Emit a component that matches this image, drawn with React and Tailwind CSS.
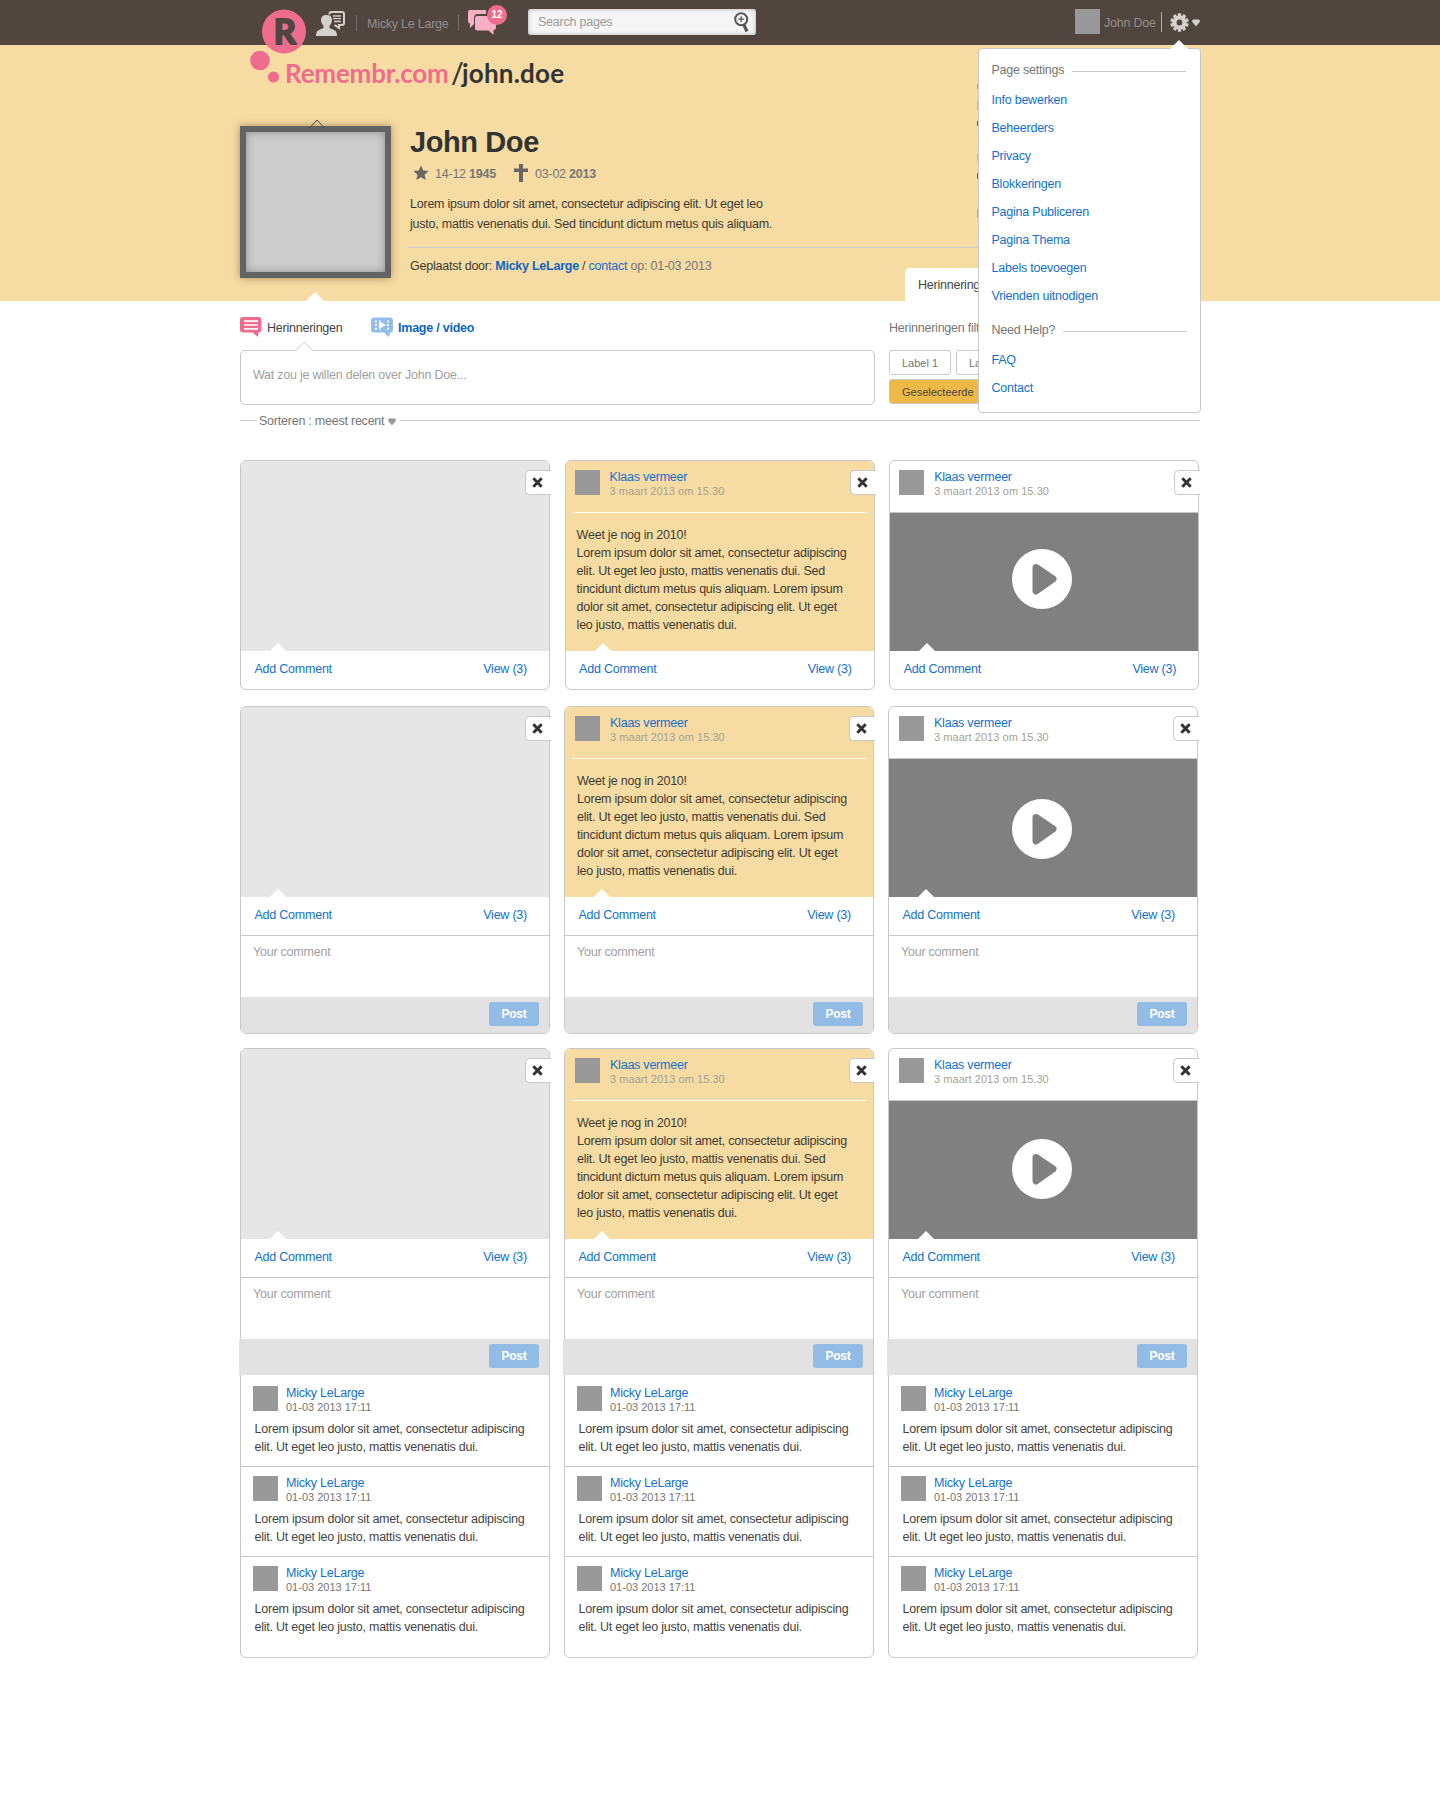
import React from "react";

const LOREM = "Lorem ipsum dolor sit amet, consectetur adipiscing";

function Notch({ className = "" }) {
  return (
    <svg className={"absolute " + className} width="18" height="9" viewBox="0 0 18 9">
      <path d="M0 9 L9 0 L18 9 Z" fill="#fff" />
    </svg>
  );
}

function Caret({ className = "" }) {
  return (
    <svg className={className} width="8" height="8" viewBox="0 0 8 8">
      <path d="M1.6 .5 H6.4 Q8 .5 8 2 Q8 3 6 5 L4 7.6 L2 5 Q0 3 0 2 Q0 .5 1.6 .5Z" fill="currentColor" />
    </svg>
  );
}

function Logo() {
  return (
    <div className="absolute left-[10px] top-[9px] h-[75px] w-[330px]">
      <svg className="absolute left-0 top-0" width="56" height="75" viewBox="250 9 56 75">
        <circle cx="284" cy="31.5" r="22" fill="#ef6c8d" />
        <circle cx="260" cy="60.5" r="9.8" fill="#ef6c8d" />
        <circle cx="273.5" cy="77" r="5.6" fill="#ef6c8d" />
        <text x="284.8" y="44" textAnchor="middle" fontFamily="Lato, sans-serif" fontWeight="700" fontSize="34.5" fill="#51453f" stroke="#51453f" strokeWidth="2" strokeLinejoin="round">R</text>
      </svg>
      <div className="absolute left-[35px] top-[47px] flex items-baseline whitespace-nowrap font-['Lato',sans-serif] text-[26px] font-bold leading-[32px]">
        <span className="w-[166px] tracking-[-0.2px] text-[#ef6c8d]">Remembr.com</span>
        <span className="w-[11px] text-[28px] font-medium text-[#333]">/</span>
        <span className="tracking-[0.2px] text-[#333]">john.doe</span>
      </div>
    </div>
  );
}

function TopBar() {
  return (
    <header className="h-[45px] bg-[#51453f]">
      <div className="relative mx-auto flex h-[45px] w-[960px] text-[#948d89]">
        <Logo />
        <svg className="ml-[76px] mt-[10px]" width="30" height="27" viewBox="0 0 30 27">
          <path d="M0 26 Q0 21 3 20 L7.5 18 V16 Q5 13.500 5 10 Q5 5 10.500 5 Q16 5 16 10 Q16 13.500 13.500 16 V18 L18 20 Q21 21 21 26 Z" fill="#d6d0cd" />
          <path d="M13.500 4.500 V4 Q13.500 2 15.500 2 H26 Q28 2 28 4 V13 Q28 15 26 15 H23 V18 L18.500 15" fill="none" stroke="#d6d0cd" strokeWidth="2" />
          <path d="M17 6 H25 M17 8.700 H25 M18 11.500 H25" stroke="#d6d0cd" strokeWidth="1.300" />
        </svg>
        <div className="ml-[10px] mt-[15px] h-4 w-px bg-[#766d68]" />
        <span className="ml-[10px] mt-[16px] w-[91px] leading-4">Micky Le Large</span>
        <div className="mt-[15px] h-4 w-px bg-[#766d68]" />
        <div className="relative ml-[9px] mt-[5px] h-[30px] w-[40px]">
          <svg className="mt-[5px]" width="30" height="26" viewBox="0 0 30 26">
            <path d="M2 0 H18 V4 H10 Q6 4 6 8 V14 L2 18 V13.500 H2 Q0 13.500 0 11 V2 Q0 0 2 0Z" fill="#f7b0c3" />
            <path d="M9 6 H25 Q28 6 28 9 V17 Q28 20 25.500 20 L25.500 25 L20.500 20.500 H9 Q7 20.500 7 18 V8 Q7 6 9 6Z" fill="#f7b0c3" />
          </svg>
          <span className="absolute left-[19px] top-0 flex size-5 items-center justify-center rounded-full bg-[#ef6c8d] text-[10px] font-bold tracking-normal text-white">12</span>
        </div>
        <div className="ml-[20px] mt-[9px] flex h-[26px] w-[228px] rounded-[3px] bg-[#f6f6f6] pl-[10px] pr-[7px] text-[#999] shadow-[inset_0_0_4px_#aaa]">
          <span className="mt-[5px] grow leading-4">Search pages</span>
          <svg className="mt-[3px]" width="15" height="21" viewBox="0 0 15 21">
            <circle cx="7.200" cy="7.200" r="6" fill="none" stroke="#555" strokeWidth="2" />
            <path d="M7.200 4.200 V10.200 M4.200 7.200 H10.200" stroke="#555" strokeWidth="1.300" />
            <path d="M10 13 L13 19.500" stroke="#555" strokeWidth="3.200" />
          </svg>
        </div>
        <div className="ml-auto mt-[9px] size-[25px] bg-[#999]" />
        <span className="ml-[4px] mt-[15px] w-[57px] leading-4">John Doe</span>
        <div className="mt-[12px] h-5 w-px bg-[#b5afac]" />
        <svg className="ml-[8px] mt-[13px]" width="19" height="19" viewBox="-9.500 -9.500 19 19">
          <g fill="#d6d0cd">
            {[0, 36, 72, 108, 144].map((a) => (
              <rect key={a} x="-1.700" y="-9.200" width="3.400" height="18.400" rx=".5" transform={"rotate(" + a + ")"} />
            ))}
            <circle r="7" />
          </g>
          <circle r="2.900" fill="#51453f" />
        </svg>
        <Caret className="ml-[3px] mt-[19px] text-[#d6d0cd]" />
      </div>
    </header>
  );
}

const linkGroups = [
  { title: "Page settings", links: ["Info bewerken", "Beheerders", "Privacy", "Blokkeringen", "Pagina Publiceren", "Pagina Thema", "Labels toevoegen", "Vrienden uitnodigen"] },
  { title: "Need Help?", links: ["FAQ", "Contact"] },
];

function SettingsMenu() {
  return (
    <div className="absolute left-[738px] top-[48px] z-20 h-[365px] w-[223px] rounded-[4px] border border-[#c8c8c8] bg-white pl-[12.500px] pr-[14px] pt-[7px]">
      <Notch className="-top-[9px] left-[191px]" />
      {linkGroups.map((g) => (
        <div key={g.title} className="mb-[6px]">
          <div className="flex h-[28px] items-center gap-[8px] text-[#757575]">
            <span>{g.title}</span>
            <div className="mt-[2px] h-px grow bg-[#c8c8c8]" />
          </div>
          <ul className="pt-[2px]">
            {g.links.map((l) => (
              <li key={l} className="h-[28px] leading-[28px] text-[#1270d0]">{l}</li>
            ))}
          </ul>
        </div>
      ))}
    </div>
  );
}

function Profile() {
  return (
    <section className="h-[256px] bg-[#f6dca3]">
      <div className="relative mx-auto flex h-[256px] w-[960px]">
        <div className="relative mt-[81px] h-[152px] w-[151px] border-[6px] border-[#636363] bg-[#ccc] shadow-[0_0_8px_rgba(90,70,30,.5),inset_0_0_8px_rgba(0,0,0,.3)]">
          <svg className="absolute -top-[13px] left-[62px]" width="18" height="10" viewBox="0 0 18 10">
            <path d="M1 9.500 L9 1 L17 9.500" fill="none" stroke="#444" strokeWidth="1" />
          </svg>
        </div>
        <Notch className="bottom-0 left-[66px]" />
        <div className="ml-[17px] grow">
          <h1 className="ml-[2px] mt-[81px] text-[29px] font-bold leading-[32px] tracking-[-0.4px] text-[#333]">John Doe</h1>
          <div className="ml-[5px] mt-[5px] flex h-[20px] items-center text-[#757575]">
            <svg width="16" height="16" viewBox="0 0 16 16">
              <path d="M8 .5 L10.300 5.500 L15.500 6 L11.500 9.700 L12.700 15 L8 12.300 L3.300 15 L4.500 9.700 L.5 6 L5.700 5.500Z" fill="#666" />
            </svg>
            <span className="ml-[6px] mt-px w-[79px]">14-12 <b>1945</b></span>
            <svg width="14" height="18" viewBox="0 0 14 18">
              <path d="M5 0 H9 V4.500 H14 V8 H9 V18 H5 V8 H0 V4.500 H5Z" fill="#666" />
            </svg>
            <span className="ml-[7px] mt-px">03-02 <b>2013</b></span>
          </div>
          <p className="ml-[2px] mt-[11px] w-[400px] leading-[20px] text-[#3f3a30]">
            {LOREM} elit. Ut eget leo<br />justo, mattis venenatis dui. Sed tincidunt dictum metus quis aliquam.
          </p>
          <div className="mt-[13px] h-px bg-[#ccc]" />
          <p className="ml-[2px] mt-[10px] text-[#3f3a30]">
            Geplaatst door: <b className="tracking-[-0.25px] text-[#0c66c4]">Micky LeLarge</b> / <span className="text-[#1270d0]">contact</span> <span className="text-[#757575]">op: 01-03 2013</span>
          </p>
        </div>
        <div className="absolute bottom-0 left-[665px] h-[33px] w-[120px] rounded-t-[5px] bg-white pl-[13px] pt-[9px] text-[#444]">Herinneringen</div>
        <div className="absolute left-[737px] top-[39px] w-px">
          <div className="h-[5px] bg-[#a39b8a]" />
          <div className="mt-[12px] h-[9px] bg-[#cbb990]" />
          <div className="mt-[11px] h-[5px] bg-[#1270d0]" />
          <div className="mt-[28px] h-[7px] bg-[#c9b68d]" />
          <div className="mt-[12px] h-[6px] bg-[#6e6450]" />
          <div className="mt-[30px] h-[9px] bg-[#a3b0ad]" />
        </div>
      </div>
    </section>
  );
}

function Composer() {
  return (
    <section className="flex h-[119px]">
      <div className="w-[635px]">
        <div className="flex h-[36px] pt-[16px]">
          <svg width="22" height="20" viewBox="0 0 22 20">
            <path d="M3 0 H18.500 Q21.500 0 21.500 3 V12.500 Q21.500 15.500 18.500 15.500 L18 20 L12.500 15.500 H3 Q0 15.500 0 12.500 V3 Q0 0 3 0Z" fill="#ef6c8d" />
            <path d="M4 4.200 H18 M4 8 H18 M4 11.800 H18" stroke="#fff" strokeWidth="1.700" />
          </svg>
          <span className="ml-[5px] mt-[3px] w-[104px] text-[#444]">Herinneringen</span>
          <svg width="22" height="20" viewBox="0 0 22 20">
            <path d="M3 .5 H19 Q22 .5 22 3.500 V12.500 Q22 15.500 19 15.500 L18 20 L13 15.500 H3 Q0 15.500 0 12.500 V3.500 Q0 .5 3 .5Z" fill="#94bee8" />
            <path d="M8 4 L15 8 L8 12Z" fill="#fff" />
            <path d="M5 3.500 V13.500 M17 3.500 V13.500" stroke="#fff" strokeWidth="1.800" strokeDasharray="2 1.600" />
            <path d="M8 3.700 H10 M8 12.700 H10" stroke="#fff" strokeWidth=".8" />
          </svg>
          <b className="ml-[5px] mt-[3px] text-[#0c66c4]">Image / video</b>
        </div>
        <div className="relative mt-[13px] h-[55px] rounded-[5px] border border-[#c8c8c8] bg-white pl-[12px] pt-[16px] text-[#a0a0a0]">
          <svg className="absolute -top-[10px] left-[54px]" width="20" height="11" viewBox="0 0 20 11">
            <path d="M1 9.500 L9.500 1 L18 9.500 V11 H1Z" fill="#fff" />
            <path d="M0 9.500 H1 L9.500 1 L18 9.500 H20" fill="none" stroke="#c8c8c8" />
          </svg>
          Wat zou je willen delen over John Doe...
        </div>
      </div>
      <div className="ml-[14px] mt-[19px] w-[311px]">
        <div className="h-[30px] text-[#757575]">Herinneringen filteren</div>
        <div className="flex gap-[5px] text-[11px] tracking-normal text-[#757575]">
          <span className="h-[25px] w-[62px] rounded-[3px] border border-[#c8c8c8] pl-[12px] leading-[24px]">Label 1</span>
          <span className="h-[25px] w-[62px] rounded-[3px] border border-[#c8c8c8] pl-[12px] leading-[24px]">Label 2</span>
        </div>
        <div className="mt-[4px] h-[25px] w-[130px] rounded-[3px] border border-[#c8c8c8] bg-[#efb945] pl-[12px] text-[11px] leading-[24px] tracking-normal text-[#444]">Geselecteerde</div>
      </div>
    </section>
  );
}

function CloseTab() {
  return (
    <div className="absolute -right-[2px] top-[9px] flex h-[25px] w-[26px] items-center rounded-l-[5px] border border-r-0 border-[#c8c8c8] bg-white pl-[6px]">
      <svg width="11" height="11" viewBox="0 0 10 10">
        <path d="M1.200 1.200 L8.800 8.800 M8.800 1.200 L1.200 8.800" stroke="#333" strokeWidth="2.700" />
      </svg>
    </div>
  );
}

function Author({ form }) {
  return (
    <div className={form ? "flex h-[51px] pl-[10px] pt-[9px]" : "flex h-[51px] pl-[9px] pt-[9px]"}>
      <div className="size-[25px] bg-[#999]" />
      <div className="ml-[10px] -mt-[1px]">
        <div className="leading-[16px] text-[#1270d0]">Klaas vermeer</div>
        <div className="text-[11px] leading-[13px] tracking-[0.05px] text-[#a59f93]">3 maart 2013 om 15.30</div>
      </div>
    </div>
  );
}

function CardBody({ kind, playTop, form }) {
  if (kind === "image") return <div className="relative h-[190px] rounded-t-[5px] bg-[#e6e6e6]"><Notch className="bottom-0 left-[29px] h-[8px] w-[16px]" /></div>;
  if (kind === "text")
    return (
      <div className="relative h-[190px] rounded-t-[5px] bg-[#f6dca3]">
        <Author form={form} />
        <div className="mx-[7px] h-px bg-white" />
        <p className={form ? "ml-[12px] mt-[13px] whitespace-nowrap leading-[18px] text-[#3f3a30]" : "ml-[11px] mt-[13px] whitespace-nowrap leading-[18px] text-[#3f3a30]"}>
          Weet je nog in 2010!<br />
          {LOREM}<br />
          elit. Ut eget leo justo, mattis venenatis dui. Sed<br />
          tincidunt dictum metus quis aliquam. Lorem ipsum<br />
          dolor sit amet, consectetur adipiscing elit. Ut eget<br />
          leo justo, mattis venenatis dui.
        </p>
        <Notch className="bottom-0 left-[29px] h-[8px] w-[16px]" />
      </div>
    );
  return (
    <div className="relative h-[190px]">
      <Author form={form} />
      <div className={form ? "flex h-[139px] justify-center border-t border-[#c8c8c8] bg-[#808080] pr-[2px]" : "flex h-[139px] justify-center border-t border-[#c8c8c8] bg-[#808080] pr-[4px]"}>
        <svg style={{ marginTop: playTop }} width="60" height="60" viewBox="0 0 60 60">
          <circle cx="30" cy="30" r="30" fill="#fff" />
          <path d="M24 18.500 L41 30 L24 42Z" fill="#808080" stroke="#808080" strokeWidth="7" strokeLinejoin="round" />
        </svg>
      </div>
      <Notch className="bottom-0 left-[29px] h-[8px] w-[16px]" />
    </div>
  );
}

function Reply({ last }) {
  return (
    <div className={last ? "h-[100px] pl-[12px] pt-[9px]" : "h-[90px] border-b border-[#c8c8c8] pl-[12px] pt-[9px]"}>
      <div className="flex">
        <div className="size-[25px] bg-[#999]" />
        <div className="ml-[8px] -mt-px">
          <div className="leading-[16px] text-[#1270d0]">Micky LeLarge</div>
          <div className="text-[11px] leading-[13px] tracking-normal text-[#757575]">01-03 2013 17:11</div>
        </div>
      </div>
      <p className="ml-[1.500px] mt-[6px] whitespace-nowrap leading-[18px] text-[#444]">
        {LOREM}<br />elit. Ut eget leo justo, mattis venenatis dui.
      </p>
    </div>
  );
}

function Card({ kind, form, replies, playTop }) {
  return (
    <article className="relative w-[310px] rounded-[6px] border border-[#c8c8c8] bg-white">
      <CardBody kind={kind} playTop={playTop} form={form} />
      <CloseTab />
      <div className="flex h-[38px] justify-between pl-[13.500px] pr-[22px] pt-[10px] text-[#1270d0]">
        <span>Add Comment</span>
        <span>View (3)</span>
      </div>
      {form && (
        <>
          <div className="h-[62px] border-t border-[#c8c8c8] pl-[12px] pt-[8px] text-[#a0a0a0]">Your comment</div>
          <div className={replies ? "-ml-[2px] flex h-[36px] justify-end bg-[#e2e2e2] pr-[10px] pt-[5px]" : "flex h-[36px] justify-end rounded-b-[5px] bg-[#e2e2e2] pr-[10px] pt-[5px]"}>
            <button className="h-[24px] w-[50px] rounded-[3px] bg-[#92bce6] text-[12px] font-bold tracking-[-0.2px] text-white">Post</button>
          </div>
        </>
      )}
      {replies && (
        <div className="pt-[2px]">
          <Reply />
          <Reply />
          <Reply last />
        </div>
      )}
    </article>
  );
}

function Row({ className, ...props }) {
  return (
    <div className={"flex " + className}>
      <Card kind="image" {...props} />
      <Card kind="text" {...props} />
      <Card kind="video" {...props} />
    </div>
  );
}

export default function App() {
  return (
    <div className="relative min-h-[1801px] bg-white font-['Liberation_Sans',Arial,sans-serif] text-[12.5px] leading-4 tracking-[-0.23px]">
      <TopBar />
      <Profile />
      <main className="mx-auto w-[960px]">
        <Composer />
        <div className="mt-[-8px] flex h-[18px] items-center text-[#757575]">
          <div className="-mt-px h-px w-[16px] bg-[#c8c8c8]" />
          <span className="ml-[3px] mr-[4px]">Sorteren : meest recent</span>
          <Caret className="mt-px text-[#999]" />
          <div className="-mt-px ml-[4px] h-px grow bg-[#c8c8c8]" />
        </div>
        <Row className="mt-[30px] h-[230px] gap-[14.6px]" playTop={36} />
        <Row className="mt-[16px] h-[328px] gap-[14px]" form playTop={40} />
        <Row className="mt-[14px] h-[610px] gap-[14px]" form replies playTop={38} />
      </main>
      <div className="absolute left-1/2 top-0 h-0 w-[960px] -translate-x-1/2">
        <SettingsMenu />
      </div>
    </div>
  );
}
